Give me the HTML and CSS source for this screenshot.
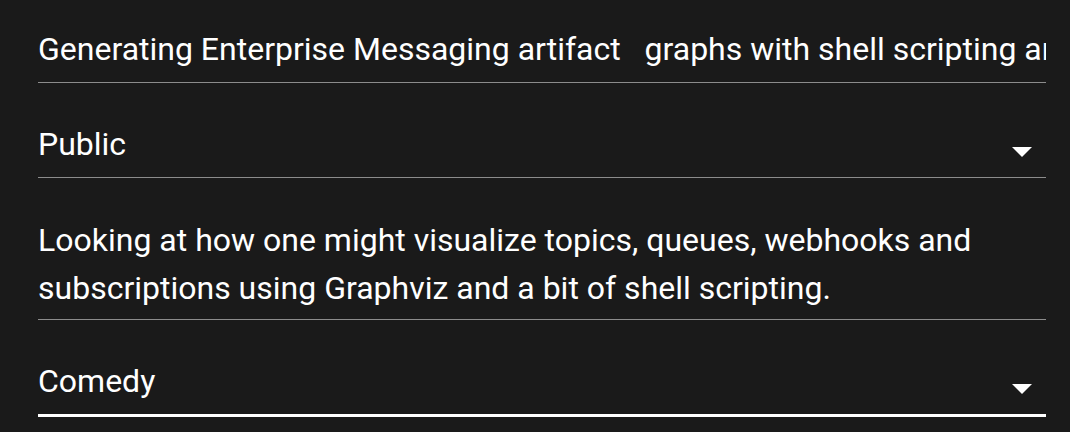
FILE: index.html
```html
<!DOCTYPE html>
<html lang="en">
<head>
    <meta charset="UTF-8">
    <meta name="viewport" content="width=device-width, initial-scale=1.0">
    <title>Edit post</title>
    <link rel="stylesheet" href="styles.css">
</head>
<body>

    <form name="postForm" id="form">
        <div class="field title">
            <div class="value single">Generating Enterprise Messaging artifact   graphs with shell scripting and Graphviz</div>
        </div>
        <div class="field select visibility">
            <div class="value">Public</div>
            <svg class="arrow" width="20" height="10" viewBox="0 0 20 10"><polygon points="0,0 20,0 10,10" fill="#fff"/></svg>
        </div>
        <div class="field area">
            <div class="value">Looking at how one might visualize topics, queues, webhooks and subscriptions using Graphviz and a bit of shell scripting.</div>
        </div>
        <div class="field select focused">
            <div class="value">Comedy</div>
            <svg class="arrow" width="20" height="10" viewBox="0 0 20 10"><polygon points="0,0 20,0 10,10" fill="#fff"/></svg>
        </div>
    </form>

</body>
</html>
```

FILE: styles.css
```css
body {
    margin: 0;
    background: #1a1a1a;
    color: #fff;
    font-family: Roboto, "Liberation Sans", sans-serif;
    font-size: 32px;
}

#form {
    width: 1008px;
    margin: 0 0 0 38px;
}

.field {
    padding: 37px 0 9px;
    border-bottom: 1px solid #8c8c8c;
    line-height: 48px;
}

.title {
    padding-top: 25px;
}

.single {
    white-space: pre;
    overflow: hidden;
}

.select {
    display: flex;
    align-items: center;
}

.select > .value {
    flex: 1;
}

.arrow {
    margin: 16px 14px 0 0;
}

.area {
    padding-top: 38px;
    padding-bottom: 7px;
}

.focused {
    border-bottom: 3px solid #fff;
}
```
